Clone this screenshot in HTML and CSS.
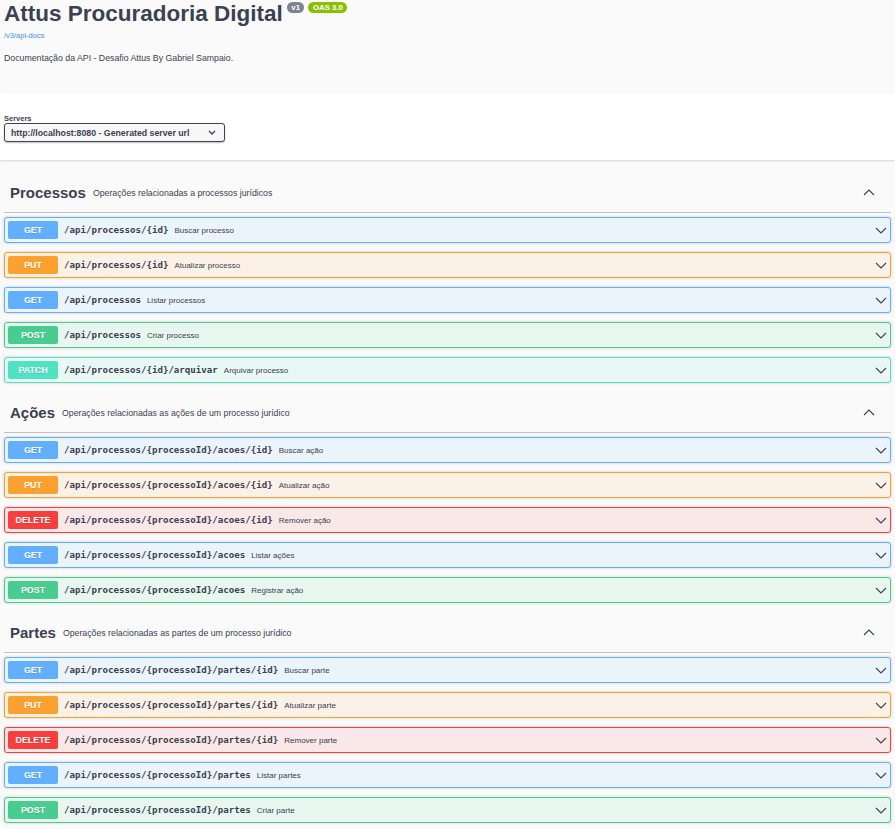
FILE: index.html
```html
<!DOCTYPE html>
<html lang="pt-BR">
<head>
<meta charset="utf-8">
<title>Attus Procuradoria Digital</title>
<link rel="stylesheet" href="styles.css">
</head>
<body>
<div class="info">
  <div class="title-row">
    <h1 class="title">Attus Procuradoria Digital</h1>
    <span class="badge ver">v1</span>
    <span class="badge oas">OAS 3.0</span>
  </div>
  <a class="link" href="#">/v3/api-docs</a>
  <p class="desc">Documentação da API - Desafio Attus By Gabriel Sampaio.</p>
</div>

<div class="scheme">
  <div class="servers-label">Servers</div>
  <div class="select">
    <span>http://localhost:8080 - Generated server url</span>
    <svg class="sel-arrow" width="8" height="5" viewBox="0 0 8 5"><polyline points="1,1 4,4 7,1" fill="none" stroke="#3b4151" stroke-width="1.3"/></svg>
  </div>
</div>

<div class="wrapper">
  <section class="tag-section">
    <div class="tag">
      <h3 class="tag-name">Processos</h3>
      <span class="tag-desc">Operações relacionadas a processos jurídicos</span>
      <span class="spacer"></span>
      <svg class="up" width="12" height="7" viewBox="0 0 12 7"><polyline points="1,6 6,1 11,6" fill="none" stroke="#3b4151" stroke-width="1.1"/></svg>
    </div>
    <div class="op get"><span class="m">GET</span><span class="path">/api/processos/{id}</span><span class="sum">Buscar processo</span><span class="spacer"></span><svg class="down" width="12" height="7" viewBox="0 0 12 7"><polyline points="1,1 6,6 11,1" fill="none" stroke="#3b4151" stroke-width="1.1"/></svg></div>
    <div class="op put"><span class="m">PUT</span><span class="path">/api/processos/{id}</span><span class="sum">Atualizar processo</span><span class="spacer"></span><svg class="down" width="12" height="7" viewBox="0 0 12 7"><polyline points="1,1 6,6 11,1" fill="none" stroke="#3b4151" stroke-width="1.1"/></svg></div>
    <div class="op get"><span class="m">GET</span><span class="path">/api/processos</span><span class="sum">Listar processos</span><span class="spacer"></span><svg class="down" width="12" height="7" viewBox="0 0 12 7"><polyline points="1,1 6,6 11,1" fill="none" stroke="#3b4151" stroke-width="1.1"/></svg></div>
    <div class="op post"><span class="m">POST</span><span class="path">/api/processos</span><span class="sum">Criar processo</span><span class="spacer"></span><svg class="down" width="12" height="7" viewBox="0 0 12 7"><polyline points="1,1 6,6 11,1" fill="none" stroke="#3b4151" stroke-width="1.1"/></svg></div>
    <div class="op patch"><span class="m">PATCH</span><span class="path">/api/processos/{id}/arquivar</span><span class="sum">Arquivar processo</span><span class="spacer"></span><svg class="down" width="12" height="7" viewBox="0 0 12 7"><polyline points="1,1 6,6 11,1" fill="none" stroke="#3b4151" stroke-width="1.1"/></svg></div>
  </section>

  <section class="tag-section">
    <div class="tag">
      <h3 class="tag-name">Ações</h3>
      <span class="tag-desc">Operações relacionadas as ações de um processo jurídico</span>
      <span class="spacer"></span>
      <svg class="up" width="12" height="7" viewBox="0 0 12 7"><polyline points="1,6 6,1 11,6" fill="none" stroke="#3b4151" stroke-width="1.1"/></svg>
    </div>
    <div class="op get"><span class="m">GET</span><span class="path">/api/processos/{processoId}/acoes/{id}</span><span class="sum">Buscar ação</span><span class="spacer"></span><svg class="down" width="12" height="7" viewBox="0 0 12 7"><polyline points="1,1 6,6 11,1" fill="none" stroke="#3b4151" stroke-width="1.1"/></svg></div>
    <div class="op put"><span class="m">PUT</span><span class="path">/api/processos/{processoId}/acoes/{id}</span><span class="sum">Atualizar ação</span><span class="spacer"></span><svg class="down" width="12" height="7" viewBox="0 0 12 7"><polyline points="1,1 6,6 11,1" fill="none" stroke="#3b4151" stroke-width="1.1"/></svg></div>
    <div class="op delete"><span class="m">DELETE</span><span class="path">/api/processos/{processoId}/acoes/{id}</span><span class="sum">Remover ação</span><span class="spacer"></span><svg class="down" width="12" height="7" viewBox="0 0 12 7"><polyline points="1,1 6,6 11,1" fill="none" stroke="#3b4151" stroke-width="1.1"/></svg></div>
    <div class="op get"><span class="m">GET</span><span class="path">/api/processos/{processoId}/acoes</span><span class="sum">Listar ações</span><span class="spacer"></span><svg class="down" width="12" height="7" viewBox="0 0 12 7"><polyline points="1,1 6,6 11,1" fill="none" stroke="#3b4151" stroke-width="1.1"/></svg></div>
    <div class="op post"><span class="m">POST</span><span class="path">/api/processos/{processoId}/acoes</span><span class="sum">Registrar ação</span><span class="spacer"></span><svg class="down" width="12" height="7" viewBox="0 0 12 7"><polyline points="1,1 6,6 11,1" fill="none" stroke="#3b4151" stroke-width="1.1"/></svg></div>
  </section>

  <section class="tag-section">
    <div class="tag">
      <h3 class="tag-name">Partes</h3>
      <span class="tag-desc">Operações relacionadas as partes de um processo jurídico</span>
      <span class="spacer"></span>
      <svg class="up" width="12" height="7" viewBox="0 0 12 7"><polyline points="1,6 6,1 11,6" fill="none" stroke="#3b4151" stroke-width="1.1"/></svg>
    </div>
    <div class="op get"><span class="m">GET</span><span class="path">/api/processos/{processoId}/partes/{id}</span><span class="sum">Buscar parte</span><span class="spacer"></span><svg class="down" width="12" height="7" viewBox="0 0 12 7"><polyline points="1,1 6,6 11,1" fill="none" stroke="#3b4151" stroke-width="1.1"/></svg></div>
    <div class="op put"><span class="m">PUT</span><span class="path">/api/processos/{processoId}/partes/{id}</span><span class="sum">Atualizar parte</span><span class="spacer"></span><svg class="down" width="12" height="7" viewBox="0 0 12 7"><polyline points="1,1 6,6 11,1" fill="none" stroke="#3b4151" stroke-width="1.1"/></svg></div>
    <div class="op delete"><span class="m">DELETE</span><span class="path">/api/processos/{processoId}/partes/{id}</span><span class="sum">Remover parte</span><span class="spacer"></span><svg class="down" width="12" height="7" viewBox="0 0 12 7"><polyline points="1,1 6,6 11,1" fill="none" stroke="#3b4151" stroke-width="1.1"/></svg></div>
    <div class="op get"><span class="m">GET</span><span class="path">/api/processos/{processoId}/partes</span><span class="sum">Listar partes</span><span class="spacer"></span><svg class="down" width="12" height="7" viewBox="0 0 12 7"><polyline points="1,1 6,6 11,1" fill="none" stroke="#3b4151" stroke-width="1.1"/></svg></div>
    <div class="op post"><span class="m">POST</span><span class="path">/api/processos/{processoId}/partes</span><span class="sum">Criar parte</span><span class="spacer"></span><svg class="down" width="12" height="7" viewBox="0 0 12 7"><polyline points="1,1 6,6 11,1" fill="none" stroke="#3b4151" stroke-width="1.1"/></svg></div>
  </section>
</div>
</body>
</html>
```

FILE: styles.css
```css
* { box-sizing: border-box; }

html, body {
  margin: 0;
  padding: 0;
  background: #fafafa;
  font-family: "Liberation Sans", Arial, sans-serif;
  color: #3b4151;
}

/* Info block */
.info {
  padding: 0 4px 29px;
}

.title-row {
  display: flex;
  align-items: flex-start;
  height: 27px;
}

.title {
  margin: 0;
  padding-top: 1px;
  font-size: 22.5px;
  line-height: 26px;
  font-weight: 700;
  color: #3b4151;
}

.badge {
  display: inline-block;
  margin-top: 2px;
  margin-left: 4px;
  height: 11px;
  line-height: 11px;
  padding: 0 4.5px;
  border-radius: 8px;
  font-size: 7.8px;
  font-weight: 700;
  color: #fff;
}

.badge.ver { background: #7d8492; }
.badge.oas { background: #89bf04; }

.link {
  display: block;
  margin-top: 4px;
  font-size: 7.5px;
  line-height: 10px;
  color: #4990e2;
  text-decoration: none;
}

.desc {
  margin: 12px 0 0;
  font-size: 8.75px;
  line-height: 11px;
}

/* Servers */
.scheme {
  background: #fff;
  box-shadow: 0 1px 2px 0 rgba(0, 0, 0, 0.15);
  padding: 21px 4px 18px;
}

.servers-label {
  font-size: 7.5px;
  font-weight: 700;
  line-height: 9px;
}

.select {
  display: flex;
  align-items: center;
  justify-content: space-between;
  width: 221px;
  height: 19px;
  padding: 0 8px 0 6px;
  border: 1.3px solid #41444e;
  border-radius: 3px;
  background: #f7f7f7;
  box-shadow: 0 1px 2px 0 rgba(0, 0, 0, 0.25);
  font-size: 8.75px;
  font-weight: 700;
  color: #3b4151;
}

/* Sections */
.wrapper {
  padding: 12px 4px 0;
}

.tag {
  display: flex;
  align-items: center;
  height: 41px;
  padding: 1px 16px 0 6px;
  border-bottom: 1px solid rgba(59, 65, 81, 0.3);
  margin-bottom: 4px;
}

.tag-name {
  margin: 0;
  font-size: 15px;
  font-weight: 700;
  color: #3b4151;
}

.tag-desc {
  margin-left: 7px;
  font-size: 8.75px;
}

.spacer { flex: 1; }

.op {
  display: flex;
  align-items: center;
  height: 26px;
  padding: 0 3px;
  margin-bottom: 9px;
  border: 1px solid;
  border-radius: 3px;
  box-shadow: 0 0 3px rgba(0, 0, 0, 0.19);
}

.m {
  width: 50px;
  height: 18px;
  line-height: 18px;
  text-align: center;
  border-radius: 2px;
  color: #fff;
  font-size: 8.9px;
  font-weight: 700;
  text-shadow: 0 1px 0 rgba(0, 0, 0, 0.1);
}

.path {
  margin-left: 6px;
  font-family: "DejaVu Sans Mono", "Liberation Mono", monospace;
  font-size: 9.15px;
  font-weight: 700;
  color: #3b4151;
}

.sum {
  margin-left: 6px;
  font-size: 8px;
  color: #3b4151;
}

.get { background: #ebf3fb; border-color: #61affe; }
.get .m { background: #61affe; }
.put { background: #fbf1e6; border-color: #fca130; }
.put .m { background: #fca130; }
.post { background: #e8f6f0; border-color: #49cc90; }
.post .m { background: #49cc90; }
.delete { background: #fae7e7; border-color: #f93e3e; }
.delete .m { background: #f93e3e; }
.patch { background: #e9f8f5; border-color: #50e3c2; }
.patch .m { background: #50e3c2; }
```
